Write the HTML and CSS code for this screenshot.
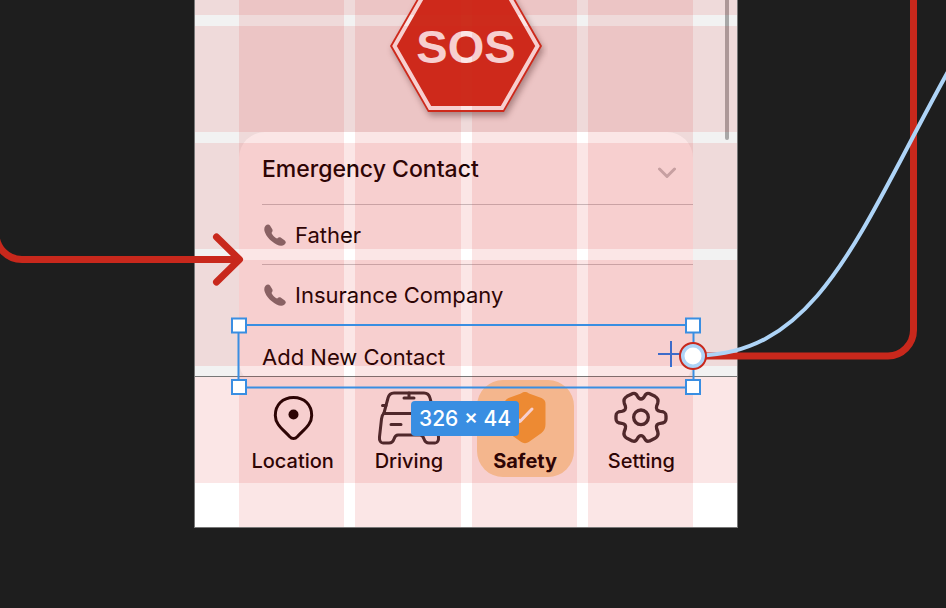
FILE: index.html
```html
<!DOCTYPE html>
<html lang="en">
<head>
<meta charset="utf-8">
<meta name="viewport" content="width=device-width, initial-scale=1">
<title>Safety screen</title>
<link rel="stylesheet" href="styles.css">
</head>
<body>
<div class="canvas">
  <main class="phone">
    <section class="sos">
      <svg class="sos-sign" viewBox="0 0 164 124" role="img" aria-label="SOS">
        <polygon class="sos-outer" points="6,46 44,-20 120,-20 158,46 120,112 44,112"/>
        <polygon class="sos-inner" points="10.500,46 46,-16 118,-16 153.500,46 118,108 46,108"/>
        <text class="sos-text" x="82" y="63">SOS</text>
      </svg>
    </section>

    <section class="card">
      <header class="card-head">
        <h1 class="card-title">Emergency Contact</h1>
        <button class="icon-button" type="button" aria-label="Collapse">
          <svg class="chevron" viewBox="0 0 18 12"><path d="M1.500 2L9 9.500L16.500 2"/></svg>
        </button>
      </header>
      <ul class="contacts">
        <li class="contact">
          <svg class="handset" viewBox="0 0 22 22"><path d="M1.500 1.800C3 0 5 0 6 1.500L8.300 5.200C9 6.800 8.400 7.800 7.600 8.800C7.600 10.500 11.500 14.300 13.200 14.400C14.500 13.400 15.500 13 17 13.800L20.800 16.500C22.300 17.800 22 19.500 20.300 20.800C17.500 22.800 12.500 21.500 7.500 17C2 12 -1.800 5.500 1.500 1.800Z"/></svg>
          <span>Father</span>
        </li>
        <li class="contact">
          <svg class="handset" viewBox="0 0 22 22"><path d="M1.500 1.800C3 0 5 0 6 1.500L8.300 5.200C9 6.800 8.400 7.800 7.600 8.800C7.600 10.500 11.500 14.300 13.200 14.400C14.500 13.400 15.500 13 17 13.800L20.800 16.500C22.300 17.800 22 19.500 20.300 20.800C17.500 22.800 12.500 21.500 7.500 17C2 12 -1.800 5.500 1.500 1.800Z"/></svg>
          <span>Insurance Company</span>
        </li>
      </ul>
      <button class="add-contact" type="button">
        <span>Add New Contact</span>
        <svg class="plus" viewBox="0 0 26 26"><path d="M0 13H26M13 0V26"/></svg>
      </button>
    </section>

    <nav class="tabs">
      <a class="tab" href="#location">
        <svg class="tab-icon tab-icon-dark" viewBox="0 0 64 56">
          <path d="M32.500 7.500C21.500 7.500 14.300 15 14.300 25.500C14.300 35 23 40 28.500 46.500C31 49.200 34 49.200 36.500 46.500C42 40 50.700 35 50.700 25.500C50.700 15 43.500 7.500 32.500 7.500Z"/>
          <circle class="dot" cx="32.500" cy="24.500" r="5"/>
        </svg>
        <span>Location</span>
      </a>
      <a class="tab" href="#driving">
        <svg class="tab-icon" viewBox="0 0 64 56">
          <path d="M7 23L11 8C12 4 14 3 17 3H47C50 3 52 4 53 8L57 23"/>
          <path d="M7 23.500H57M5.500 15.500H9M55 15.500H58.500M27 8H37M32 3V8M14 34.500H24M40 34.500H50"/>
          <path d="M7 23C5 25 4.800 26 4.500 29L2.500 47C2 51 4 53 6 53H12C15 53 16 52 17 49C18 46 19 45 21 45H43C45 45 46 46 47 49C48 52 49 53 52 53H58C60 53 62 51 61.500 47L59.500 29C59.200 26 59 25 57 23"/>
        </svg>
        <span>Driving</span>
      </a>
      <a class="tab tab-active" href="#safety" aria-current="page">
        <svg class="tab-icon" viewBox="0 0 64 56">
          <path class="shield" d="M28 3.500C31 1.600 33 1.600 36 3.500L48.500 8C51.500 9.500 52.500 11 52.500 14V34C52.500 38 51.500 40.500 48.500 43L36.500 51.500C33 53.700 31 53.700 27.500 51.500L15.500 43C12.500 40.500 11.500 38 11.500 34V14C11.500 11 12.500 9.500 15.500 8Z"/>
          <path class="tick" d="M22 26L27 31.500L39 19"/>
        </svg>
        <span>Safety</span>
      </a>
      <a class="tab" href="#setting">
        <svg class="tab-icon tab-icon-gear" viewBox="-96 -82 192 168">
          <path d="M0 -55C6 -55 8 -58 11 -64C14 -71 19 -73 26 -71L42 -63C51 -58 53 -52 50 -42L47 -34C44 -24 49 -19 58 -18C70 -17 75 -14 75 -4V4C75 14 70 17 58 18C49 19 44 24 47 34L50 42C53 52 51 58 42 63L26 71C19 73 14 71 11 64C8 58 6 55 0 55C-6 55 -8 58 -11 64C-14 71 -19 73 -26 71L-42 63C-51 58 -53 52 -50 42L-47 34C-44 24 -49 19 -58 18C-70 17 -75 14 -75 4V-4C-75 -14 -70 -17 -58 -18C-49 -19 -44 -24 -47 -34L-50 -42C-53 -52 -51 -58 -42 -63L-26 -71C-19 -73 -14 -71 -11 -64C-8 -58 -6 -55 0 -55Z"/>
          <circle cx="0" cy="0" r="22"/>
        </svg>
        <span>Setting</span>
      </a>
    </nav>

    <div class="scrollbar"></div>
    <div class="guides guide-rows" aria-hidden="true"><i></i><i></i><i></i><i></i><i></i></div>
    <div class="guides guide-columns" aria-hidden="true"><i></i><i></i><i></i><i></i></div>
  </main>

  <svg class="wires" viewBox="0 0 946 608" aria-hidden="true">
    <path class="wire-red" d="M-4 190V233A26 26 0 0 0 22 259.500H240"/>
    <path class="wire-red wire-head" d="M216.500 237L239.500 259.500L216.500 282"/>
    <rect class="selection" x="238.500" y="325" width="455" height="62.500"/>
    <path class="wire-red" d="M700 356H888A26 26 0 0 0 913.500 330V-5"/>
    <path class="wire-blue" d="M700 355.500C820 352 860 230 950 68"/>
    <rect class="handle" x="232" y="318.500" width="14" height="14"/>
    <rect class="handle" x="686" y="318.500" width="14" height="14"/>
    <rect class="handle" x="232" y="380" width="14" height="14"/>
    <rect class="handle" x="686" y="380" width="14" height="14"/>
    <circle class="port" cx="693" cy="356" r="13"/>
    <circle class="port-core" cx="693" cy="356" r="8.500"/>
  </svg>
  <output class="size-badge">326 × 44</output>
</div>
</body>
</html>
```

FILE: styles.css
```css
* {
  box-sizing: border-box;
}

body {
  margin: 0;
  background: #1e1e1e;
  color: #000;
  font-family: Inter, "Liberation Sans", sans-serif;
  font-size: 22px;
  line-height: 28px;
}

.canvas {
  position: relative;
  display: grid;
  grid-template-columns: 194fr 544fr 208fr;
  align-items: start;
  min-height: 100vh;
  overflow: hidden;
}

.phone {
  position: relative;
  grid-column: 2;
  overflow: hidden;
  border: 1px solid #777;
  border-top: 0;
  background: #f2f2f2;
}

.sos {
  display: flex;
  justify-content: center;
  height: 132px;
}

.sos-sign {
  width: 164px;
  height: 124px;
}

.sos-outer {
  fill: #cc2e1d;
  filter: drop-shadow(2px 4px 3px rgba(0, 0, 0, 0.35));
}

.sos-inner {
  fill: none;
  stroke: #fff;
  stroke-width: 4;
}

.sos-text {
  fill: #fff;
  font: bold 47px "Liberation Sans", sans-serif;
  text-anchor: middle;
}

.card {
  margin: 0 44px;
  padding-left: 23px;
  border-radius: 26px;
  background: #fff;
}

.card-head,
.contact,
.add-contact {
  display: flex;
  align-items: center;
  width: 100%;
  height: 60px;
}

.card-head {
  justify-content: space-between;
  height: 72px;
  padding: 2px 17px 0 0;
}

.card-title {
  margin: 0;
  font-size: 23px;
  font-weight: 500;
}

.icon-button,
.add-contact {
  border: 0;
  background: none;
  color: inherit;
  font: inherit;
}

.icon-button {
  display: flex;
  padding: 8px 0 0;
}

.chevron {
  width: 18px;
  height: 12px;
  fill: none;
  stroke: #c3c3c5;
  stroke-width: 3;
  stroke-linecap: round;
  stroke-linejoin: round;
}

.contacts {
  margin: 0;
  padding: 0;
  list-style: none;
}

.contact {
  gap: 9px;
  padding-left: 2px;
  border-top: 1px solid #c6c6c8;
}

.handset {
  width: 22px;
  height: 22px;
  fill: #747476;
}

.add-contact {
  justify-content: space-between;
  height: 63px;
  padding: 0 9px 4px 0;
}

.add-contact span {
  padding-top: 6px;
}

.plus {
  width: 26px;
  height: 26px;
  fill: none;
  stroke: #1581f8;
  stroke-width: 2;
}

.tabs {
  position: relative;
  display: grid;
  grid-template-columns: repeat(4, 1fr);
  gap: 11px;
  align-items: start;
  justify-items: center;
  height: 151px;
  margin-top: -11px;
  padding: 3px 43px 0 45px;
  border-top: 1px solid #777;
  background: #fff;
}

.tab {
  display: flex;
  flex-direction: column;
  align-items: center;
  gap: 4px;
  width: 97px;
  height: 97px;
  padding-top: 10px;
  border-radius: 26px;
  color: inherit;
  font-size: 20px;
  font-weight: 500;
  line-height: 22px;
  text-decoration: none;
}

.tab-active {
  background: #fce0ac;
  font-weight: 700;
}

.tab-icon {
  width: 64px;
  height: 56px;
  fill: none;
  stroke: #2c2c30;
  stroke-width: 3;
  stroke-linecap: round;
  stroke-linejoin: round;
}

.tab-icon-dark {
  stroke: #000;
}

.tab-icon-gear {
  stroke-width: 10;
}

.dot {
  fill: #000;
  stroke: none;
}

.shield {
  fill: #f3a83a;
  stroke: none;
}

.tick {
  stroke: #fff;
}

.scrollbar {
  position: absolute;
  top: -40px;
  right: 8px;
  width: 4px;
  height: 180px;
  border-radius: 2px;
  background: #a8a8a8;
}

.guides {
  position: absolute;
  inset: 0;
  display: grid;
  gap: 11px;
  pointer-events: none;
}

.guides i {
  background: rgba(220, 30, 24, 0.11);
}

.guide-rows {
  top: -91px;
  grid-auto-rows: 106px;
}

.guide-columns {
  grid-template-columns: repeat(4, 1fr);
  padding: 0 44px;
}

.wires {
  position: absolute;
  top: 0;
  left: 0;
  width: 100%;
  fill: none;
}

.wire-red {
  stroke: #c8281c;
  stroke-width: 7;
}

.wire-head {
  stroke-linecap: round;
  stroke-linejoin: round;
}

.wire-blue {
  stroke: #aed4f7;
  stroke-width: 4;
}

.selection {
  stroke: #398ee2;
  stroke-width: 2;
}

.handle {
  fill: #fff;
  stroke: #398ee2;
  stroke-width: 2;
}

.port {
  fill: #aed4f7;
  stroke: #c8281c;
  stroke-width: 2;
}

.port-core {
  fill: #fff;
}

.size-badge {
  position: absolute;
  top: 401px;
  left: 411px;
  padding: 4px 8px;
  border-radius: 4px;
  background: #398ee2;
  color: #fff;
  font-size: 21px;
  font-weight: 500;
  line-height: 27px;
  white-space: nowrap;
}
```
